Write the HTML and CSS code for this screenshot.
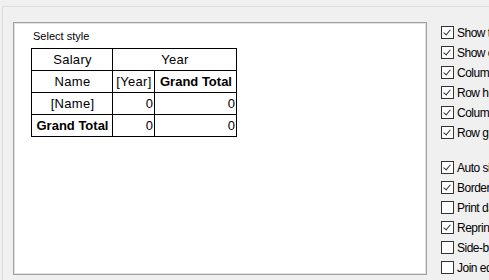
FILE: index.html
```html
<!DOCTYPE html>
<html>
<head>
<meta charset="utf-8">
<link rel="stylesheet" href="styles.css">
</head>
<body>
<div class="frame">
  <div class="panel">
    <div class="caption">Select style</div>
    <table class="pivot">
      <colgroup><col class="c1"><col class="c2"><col class="c3"></colgroup>
      <tr><td class="ctr">Salary</td><td class="ctr" colspan="2">Year</td></tr>
      <tr><td class="ctr">Name</td><td class="ctr">[Year]</td><td class="ctr b">Grand Total</td></tr>
      <tr><td class="ctr">[Name]</td><td class="num">0</td><td class="num">0</td></tr>
      <tr><td class="ctr b">Grand Total</td><td class="num">0</td><td class="num">0</td></tr>
    </table>
  </div>
  <div class="options">
    <div class="group">
      <div class="opt"><span class="box on"></span><span class="lbl">Show totals for rows</span></div>
      <div class="opt"><span class="box on"></span><span class="lbl">Show column totals</span></div>
      <div class="opt"><span class="box on"></span><span class="lbl">Column headers</span></div>
      <div class="opt"><span class="box on"></span><span class="lbl">Row headers</span></div>
      <div class="opt"><span class="box on"></span><span class="lbl">Column grand totals</span></div>
      <div class="opt"><span class="box on"></span><span class="lbl">Row grand totals</span></div>
    </div>
    <div class="group">
      <div class="opt"><span class="box on"></span><span class="lbl">Auto size columns</span></div>
      <div class="opt"><span class="box on"></span><span class="lbl">Border</span></div>
      <div class="opt"><span class="box"></span><span class="lbl">Print data labels</span></div>
      <div class="opt"><span class="box on"></span><span class="lbl">Reprint labels</span></div>
      <div class="opt"><span class="box"></span><span class="lbl">Side-by-side</span></div>
      <div class="opt"><span class="box"></span><span class="lbl">Join equal cells</span></div>
    </div>
  </div>
</div>
</body>
</html>
```
FILE: styles.css
```css
html, body {
  margin: 0;
  padding: 0;
}
body {
  width: 489px;
  height: 280px;
  overflow: hidden;
  background: #f0f0f0;
  font-family: "Liberation Sans", Arial, sans-serif;
  color: #000;
}
.frame {
  margin: 6px 0 0 2px;
  height: 280px;
  border-top: 1px solid #dcdcdc;
  border-left: 1px solid #dcdcdc;
  display: flex;
  align-items: flex-start;
}
.panel {
  margin: 15px 0 0 10px;
  width: 395px;
  height: 251px;
  flex: none;
  background: #fff;
  border: 1px solid #a0a0a0;
  box-shadow: 0 0 0 1px #e3e3e3 inset;
  padding: 0 0 0 17px;
  box-sizing: content-box;
}
.caption {
  font-size: 11px;
  line-height: 13px;
  margin: 7px 0 0 2px;
  height: 13px;
}
.pivot {
  margin-top: 5px;
  border-collapse: collapse;
  table-layout: fixed;
  width: 206px;
  font-size: 13px;
}
.c1 { width: 81px; }
.c2 { width: 42px; }
.c3 { width: 82px; }
.pivot td {
  border: 1px solid #000;
  height: 21px;
  padding: 0 1px 0 2px;
  line-height: 21px;
  white-space: nowrap;
  overflow: hidden;
  box-sizing: border-box;
}
.pivot td.ctr { text-align: center; letter-spacing: 0.3px; }
.pivot td.num { text-align: right; }
.pivot td.b { font-weight: bold; letter-spacing: 0; }
.options {
  margin: 16px 0 0 14px;
  display: flex;
  flex-direction: column;
  gap: 15px;
  white-space: nowrap;
}
.opt {
  height: 20px;
  display: flex;
  align-items: flex-start;
  gap: 3px;
}
.box {
  flex: none;
  width: 13px;
  height: 13px;
  margin-top: 3px;
  box-sizing: border-box;
  border: 1px solid #333;
  background: #fff;
  position: relative;
}
.box.on::after {
  content: "";
  position: absolute;
  left: 2px;
  top: 1px;
  width: 3px;
  height: 6px;
  border-right: 1.5px solid #333;
  border-bottom: 1.5px solid #333;
  transform: translate(1px, 0) rotate(40deg);
  transform-origin: center;
}
.lbl {
  font-size: 12px;
  line-height: 20px;
  letter-spacing: -0.5px;
}
```
